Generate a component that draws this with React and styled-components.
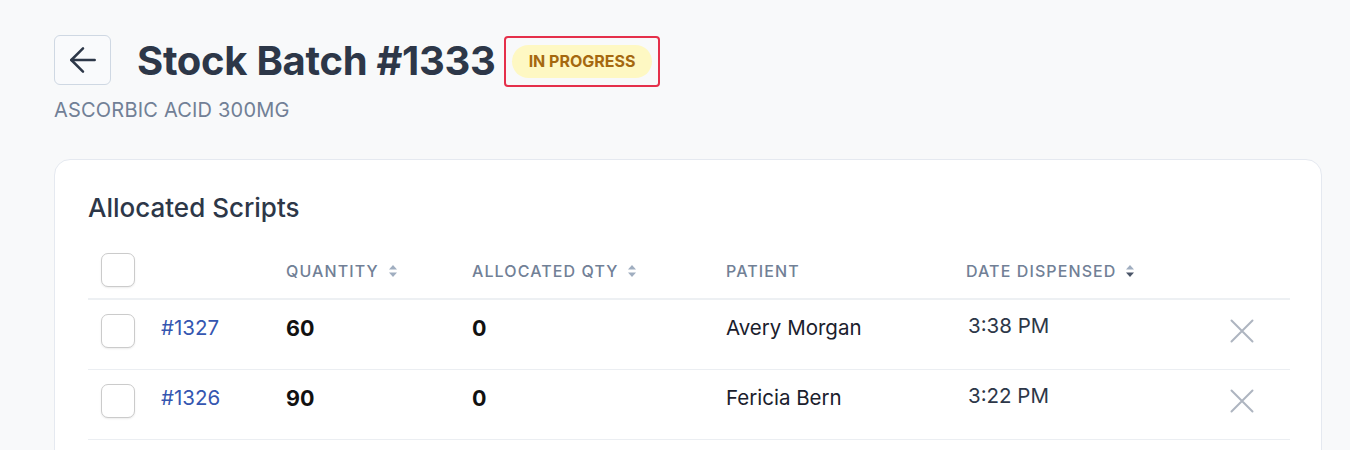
import React from 'react'
import styled, { createGlobalStyle } from 'styled-components'
import { ArrowLeft } from 'lucide-react'

const GlobalStyle = createGlobalStyle`
  body {
    margin: 0;
    background: #f8f9fa;
    font-family: Inter, "Noto Sans", sans-serif;
  }
`

const rows = [
  { id: '#1327', qty: 60, allocated: 0, patient: 'Avery Morgan', date: '3:38 PM' },
  { id: '#1326', qty: 90, allocated: 0, patient: 'Fericia Bern', date: '3:22 PM' },
  { id: '#1325', qty: 30, allocated: 0, patient: 'Jordan Lee', date: '3:10 PM' },
]

const SortIcon = ({ active }) => (
  <svg width="10" height="14" viewBox="0 0 10 14">
    <path d="M5 1 L9 5.5 H1 Z" fill="#a0aec0" />
    <path d="M5 13 L9 8.5 H1 Z" fill={active ? '#4a5568' : '#a0aec0'} />
  </svg>
)

const CloseIcon = () => (
  <svg width="24" height="24" viewBox="0 0 24 24">
    <path d="M1.5 1.5 L22.5 22.5 M22.5 1.5 L1.5 22.5" stroke="#aeb5c0" strokeWidth="2" strokeLinecap="round" />
  </svg>
)

const App = () => {
  return (
    <Page>
      <GlobalStyle />
      <TitleRow>
        <BackButton aria-label="Back">
          <ArrowLeft size={40} strokeWidth={1.5} />
        </BackButton>
        <Title>Stock Batch #1333</Title>
        <BadgeFrame>
          <Badge>IN PROGRESS</Badge>
        </BadgeFrame>
      </TitleRow>
      <Subtitle>ASCORBIC ACID 300MG</Subtitle>

      <Card>
        <CardTitle>Allocated Scripts</CardTitle>
        <Table>
          <HeadRow>
            <Cell><Checkbox /></Cell>
            <Cell />
            <HeadCell>QUANTITY <SortIcon /></HeadCell>
            <HeadCell>ALLOCATED QTY <SortIcon /></HeadCell>
            <HeadCell>PATIENT</HeadCell>
            <HeadCell>DATE DISPENSED <SortIcon active /></HeadCell>
            <Cell />
          </HeadRow>
          {rows.map(r => (
            <Row key={r.id}>
              <BodyCell><Checkbox /></BodyCell>
              <BodyCell><IdLink href="#">{r.id}</IdLink></BodyCell>
              <BodyCell><Strong>{r.qty}</Strong></BodyCell>
              <BodyCell><Strong>{r.allocated}</Strong></BodyCell>
              <BodyCell><Plain>{r.patient}</Plain></BodyCell>
              <BodyCell><DateText>{r.date}</DateText></BodyCell>
              <BodyCell><RemoveButton aria-label="Remove"><CloseIcon /></RemoveButton></BodyCell>
            </Row>
          ))}
        </Table>
      </Card>
    </Page>
  )
}

const Page = styled.div`
  padding: 35px 28px 0 54px;
`

const TitleRow = styled.div`
  display: flex;
  align-items: center;
  height: 52px;
`

const BackButton = styled.button`
  width: 57px;
  height: 50px;
  display: flex;
  align-items: center;
  justify-content: center;
  background: #f9fafc;
  border: 1px solid #cfd8e3;
  border-radius: 6px;
  color: #2d3748;
  padding: 0;
  margin-right: 26px;
  margin-top: -2px;
`

const Title = styled.h1`
  margin: 0 8px 0 0;
  font-size: 40px;
  font-weight: 700;
  color: #2d3748;
  letter-spacing: -0.3px;
  line-height: 52px;
`

const BadgeFrame = styled.div`
  border: 2px solid #e5304a;
  border-radius: 4px;
  padding: 7px 6px;
  display: flex;
`

const Badge = styled.span`
  background: #fef8c3;
  color: #a5680f;
  font-size: 16px;
  font-weight: 700;
  border-radius: 17px;
  padding: 0 16px 0 17px;
  line-height: 33px;
`

const Subtitle = styled.div`
  margin-top: 11px;
  font-size: 20px;
  color: #718096;
  line-height: 24px;
  letter-spacing: 0.2px;
`

const Card = styled.div`
  margin-top: 37px;
  background: #fff;
  border: 1px solid #e5e9f0;
  border-radius: 16px;
  padding: 32px 32px 0 33px;
  height: 320px;
`

const CardTitle = styled.h2`
  margin: 0;
  font-size: 26px;
  font-weight: 500;
  color: #2d3748;
  line-height: 32px;
`

const Table = styled.div`
  margin-top: 18px;
  display: grid;
  grid-template-columns: 60px 125px 186px 254px 240px 250px 87px;
`

const HeadRow = styled.div`
  display: contents;
  & > * {
    height: 58px;
    border-bottom: 2px solid #edf0f3;
  }
`

const Row = styled.div`
  display: contents;
  & > * {
    height: 70px;
    border-bottom: 1.5px solid #ebeef2;
  }
`

const Cell = styled.div`
  display: flex;
  align-items: center;
  padding-left: 13px;
  box-sizing: border-box;
`

const BodyCell = styled(Cell)`
  padding-bottom: 8px;
`

const HeadCell = styled(Cell)`
  gap: 9px;
  font-size: 16px;
  font-weight: 500;
  letter-spacing: 1.1px;
  color: #718096;
  padding-top: 2px;
`

const Checkbox = styled.span`
  display: block;
  width: 34px;
  height: 34px;
  box-sizing: border-box;
  border: 1.5px solid #cbcbcb;
  border-radius: 7px;
  background: #fff;
  box-shadow: 0 1px 2px rgba(0, 0, 0, 0.08);
`

const IdLink = styled.a`
  color: #3556b0;
  font-size: 20.5px;
  text-decoration: none;
  margin-bottom: 6px;
`

const Strong = styled.span`
  font-size: 21.5px;
  font-weight: 700;
  color: #111;
  margin-bottom: 6px;
`

const Plain = styled.span`
  font-size: 20.5px;
  color: #1a202c;
  margin-bottom: 6px;
`

const DateText = styled.span`
  font-size: 20.5px;
  color: #2d3748;
  margin-bottom: 10px;
  padding-left: 2px;
`

const RemoveButton = styled.button`
  background: none;
  border: none;
  padding: 0;
  margin-left: 14px;
  display: flex;
`

export default App
